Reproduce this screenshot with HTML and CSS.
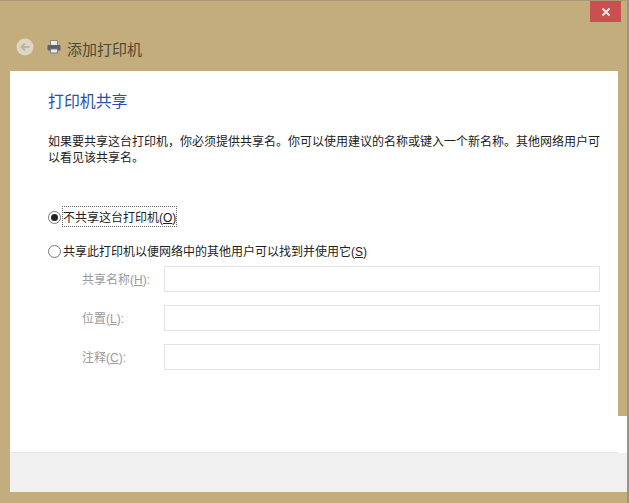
FILE: index.html
```html
<!DOCTYPE html>
<html lang="zh-CN">
<head>
<meta charset="utf-8">
<title>添加打印机</title>
<link rel="stylesheet" href="styles.css">
</head>
<body>
<div class="window">
  <div class="caption">
    <button class="close" aria-label="关闭"><svg width="10" height="10" viewBox="0 0 10 10"><path d="M1.5 1.5l7 7M8.5 1.500l-7 7" stroke="#fbe9e6" stroke-width="2"/></svg></button>
  </div>
  <div class="titlebar">
    <svg class="back" width="18" height="18" viewBox="0 0 18 18"><circle cx="9" cy="9" r="8.500" fill="#dcd6c4"/><path d="M13.500 9H6M9 5.500L5.500 9 9 12.500" fill="none" stroke="#bdb49b" stroke-width="2"/></svg>
    <svg class="printer" width="14" height="14" viewBox="0 0 14 14"><rect x="3.500" y="0.500" width="7" height="5" fill="#ece9e0" stroke="#8b8a84"/><rect x="0.500" y="5" width="13" height="5.500" rx="1" fill="#5b626d"/><rect x="3.500" y="9" width="7" height="4" fill="#ece9e0" stroke="#7b7d80"/></svg>
    <span class="title">添加打印机</span>
  </div>
  <div class="panel">
    <main class="content">
      <h1 class="heading">打印机共享</h1>
      <p class="intro">如果要共享这台打印机，你必须提供共享名。你可以使用建议的名称或键入一个新名称。其他网络用户可以看见该共享名。</p>
      <div class="option first">
        <span class="radio checked"></span>
        <span class="focus">不共享这台打印机(<u>O</u>)</span>
      </div>
      <div class="option second">
        <span class="radio"></span>
        <span>共享此打印机以便网络中的其他用户可以找到并使用它(<u>S</u>)</span>
      </div>
      <div class="fields">
        <div class="field"><label>共享名称(<u>H</u>):</label><div class="input"></div></div>
        <div class="field"><label>位置(<u>L</u>):</label><div class="input"></div></div>
        <div class="field"><label>注释(<u>C</u>):</label><div class="input"></div></div>
      </div>
    </main>
    <div class="footer"></div>
  </div>
  <div class="edge-patch"></div>
</div>
</body>
</html>
```
FILE: styles.css
```css
* { box-sizing: border-box; }
html, body { margin: 0; padding: 0; }
body { width: 629px; height: 503px; overflow: hidden; background: #fff; font-family: "Liberation Sans", "Noto Sans CJK SC", sans-serif; }
.window { position: relative; width: 629px; height: 503px; display: flex; flex-direction: column; background: #c4ad7c; border-top: 1px solid #a89a78; border-right: 2px solid #9a9486; padding: 0 9px 11px 10px; }
.caption { height: 22px; flex: none; display: flex; justify-content: flex-end; }
.close { width: 31px; height: 21px; margin-right: -3px; padding: 0; border: 0; background: #ca4f50; display: flex; align-items: center; justify-content: center; }
.titlebar { height: 48px; flex: none; display: flex; align-items: center; padding: 0 0 0 6px; color: #4f4936; }
.back { margin-right: 13px; }
.printer { margin-right: 6px; }
.title { font-size: 15px; padding-top: 2px; }
.panel { flex: 1; display: flex; flex-direction: column; background: #fff; min-height: 0; }
.content { flex: 1; padding: 21px 18px 0 38px; color: #222; }
.heading { margin: 0; font-size: 15.9px; line-height: 20px; font-weight: 400; color: #2a50a6; }
.intro { margin: 22px 0 0; font-size: 12px; line-height: 16px; }
.option { display: flex; align-items: center; font-size: 12px; height: 18px; }
.first { margin-top: 42px; }
.second { margin-top: 16px; }
.option > span:last-child { position: relative; top: -1px; }
.radio { width: 13px; height: 13px; border-radius: 50%; border: 1px solid #777; background: #fff; margin-right: 2px; flex: none; display: flex; align-items: center; justify-content: center; }
.radio.checked::after { content: ""; width: 7px; height: 7px; border-radius: 50%; background: #222; }
.focus { outline: 1px dotted #666; padding: 1px 0; }
.fields { margin-top: 6px; padding-left: 34px; display: flex; flex-direction: column; gap: 13px; }
.field { display: flex; align-items: center; height: 26px; color: #9a9a9a; font-size: 12px; }
.field label { width: 82px; flex: none; padding-bottom: 1px; }
.input { flex: 1; height: 26px; border: 1px solid #e3e3e3; background: #fff; }
.footer { height: 40px; flex: none; margin-right: -9px; background: #f0f0f0; border-top: 1px solid #e6e6e6; }
.edge-patch { position: absolute; right: 0; top: 415px; width: 9px; height: 37px; background: #fff; }
```
